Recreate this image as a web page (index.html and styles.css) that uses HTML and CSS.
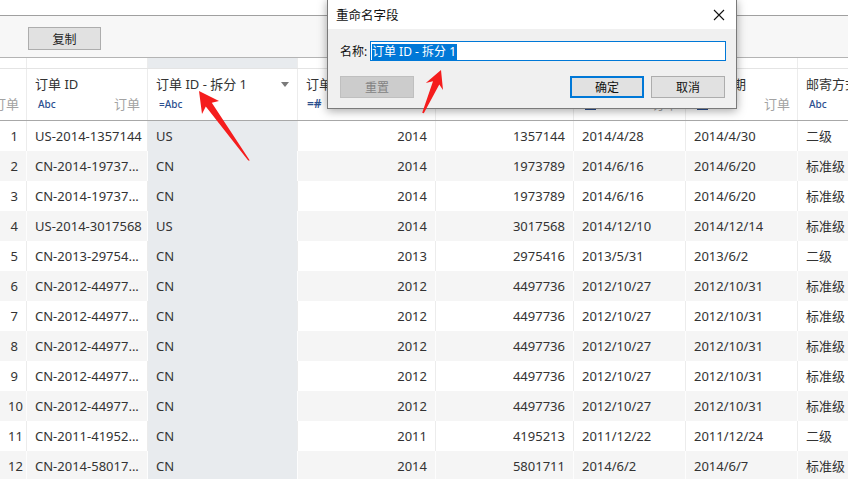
FILE: index.html
```html
<!doctype html>
<html lang="zh">
    <head>
        <meta charset="UTF-8">
        <title>重命名字段</title>
        <link rel="stylesheet" href="styles.css">
    </head>
    <body>
        <div class="app">
            <div class="topbar"></div>
            <div class="toolbar">
                <button class="btn" type="button">复制</button>
            </div>

            <div class="sheet">
                <div class="grid strip">
                    <div class="c"></div><div class="c"></div><div class="c split"></div><div class="c"></div>
                    <div class="c"></div><div class="c"></div><div class="c"></div><div class="c"></div>
                </div>
                <div class="grid head">
                    <div class="h"><div class="h-name"></div><div class="h-meta end"><span class="h-src">订单</span></div></div>
                    <div class="h"><div class="h-name">订单 ID</div><div class="h-meta"><span class="h-type">Abc</span><span class="h-src">订单</span></div></div>
                    <div class="h"><div class="h-name">订单 ID - 拆分 1<span class="caret"></span></div><div class="h-meta"><span class="h-type">=Abc</span></div></div>
                    <div class="h"><div class="h-name">订单年</div><div class="h-meta"><span class="h-type num-type">=#</span></div></div>
                    <div class="h"><div class="h-name">订单编号</div><div class="h-meta"><span class="h-type num-type">=#</span></div></div>
                    <div class="h"><div class="h-name">订单日期</div><div class="h-meta"><span class="h-type"><span class="cal"></span></span><span class="h-src">订单</span></div></div>
                    <div class="h"><div class="h-name">发货日期</div><div class="h-meta"><span class="h-type"><span class="cal"></span></span><span class="h-src">订单</span></div></div>
                    <div class="h"><div class="h-name">邮寄方式</div><div class="h-meta"><span class="h-type">Abc</span><span class="h-src">订单</span></div></div>
                </div>

                <div class="rows">
                    <div class="grid row"><div class="c r">1</div><div class="c">US-2014-1357144</div><div class="c split">US</div><div class="c r">2014</div><div class="c r">1357144</div><div class="c">2014/4/28</div><div class="c">2014/4/30</div><div class="c">二级</div></div>
                    <div class="grid row"><div class="c r">2</div><div class="c">CN-2014-19737...</div><div class="c split">CN</div><div class="c r">2014</div><div class="c r">1973789</div><div class="c">2014/6/16</div><div class="c">2014/6/20</div><div class="c">标准级</div></div>
                    <div class="grid row"><div class="c r">3</div><div class="c">CN-2014-19737...</div><div class="c split">CN</div><div class="c r">2014</div><div class="c r">1973789</div><div class="c">2014/6/16</div><div class="c">2014/6/20</div><div class="c">标准级</div></div>
                    <div class="grid row"><div class="c r">4</div><div class="c">US-2014-3017568</div><div class="c split">US</div><div class="c r">2014</div><div class="c r">3017568</div><div class="c">2014/12/10</div><div class="c">2014/12/14</div><div class="c">标准级</div></div>
                    <div class="grid row"><div class="c r">5</div><div class="c">CN-2013-29754...</div><div class="c split">CN</div><div class="c r">2013</div><div class="c r">2975416</div><div class="c">2013/5/31</div><div class="c">2013/6/2</div><div class="c">二级</div></div>
                    <div class="grid row"><div class="c r">6</div><div class="c">CN-2012-44977...</div><div class="c split">CN</div><div class="c r">2012</div><div class="c r">4497736</div><div class="c">2012/10/27</div><div class="c">2012/10/31</div><div class="c">标准级</div></div>
                    <div class="grid row"><div class="c r">7</div><div class="c">CN-2012-44977...</div><div class="c split">CN</div><div class="c r">2012</div><div class="c r">4497736</div><div class="c">2012/10/27</div><div class="c">2012/10/31</div><div class="c">标准级</div></div>
                    <div class="grid row"><div class="c r">8</div><div class="c">CN-2012-44977...</div><div class="c split">CN</div><div class="c r">2012</div><div class="c r">4497736</div><div class="c">2012/10/27</div><div class="c">2012/10/31</div><div class="c">标准级</div></div>
                    <div class="grid row"><div class="c r">9</div><div class="c">CN-2012-44977...</div><div class="c split">CN</div><div class="c r">2012</div><div class="c r">4497736</div><div class="c">2012/10/27</div><div class="c">2012/10/31</div><div class="c">标准级</div></div>
                    <div class="grid row"><div class="c r">10</div><div class="c">CN-2012-44977...</div><div class="c split">CN</div><div class="c r">2012</div><div class="c r">4497736</div><div class="c">2012/10/27</div><div class="c">2012/10/31</div><div class="c">标准级</div></div>
                    <div class="grid row"><div class="c r">11</div><div class="c">CN-2011-41952...</div><div class="c split">CN</div><div class="c r">2011</div><div class="c r">4195213</div><div class="c">2011/12/22</div><div class="c">2011/12/24</div><div class="c">二级</div></div>
                    <div class="grid row"><div class="c r">12</div><div class="c">CN-2014-58017...</div><div class="c split">CN</div><div class="c r">2014</div><div class="c r">5801711</div><div class="c">2014/6/2</div><div class="c">2014/6/7</div><div class="c">标准级</div></div>
                </div>
            </div>

            <div class="dialog">
                <div class="dlg-title">
                    <span>重命名字段</span>
                    <svg class="close" width="12" height="12" viewBox="0 0 12 12">
                        <path d="M1 1 L11 11 M11 1 L1 11" stroke="#111" stroke-width="1.1" fill="none"/>
                    </svg>
                </div>
                <div class="dlg-body">
                    <div class="field">
                        <label class="field-label">名称:</label>
                        <div class="field-input"><span class="sel">订单 ID - 拆分 1</span></div>
                    </div>
                    <div class="actions">
                        <button class="dbtn disabled" type="button">重置</button>
                        <span class="spacer"></span>
                        <button class="dbtn primary" type="button">确定</button>
                        <button class="dbtn" type="button">取消</button>
                    </div>
                </div>
            </div>

            <!-- annotation arrows -->
            <svg class="marks" width="848" height="479" viewBox="0 0 848 479">
                <polygon fill="#f51d1d" points="199,91 219,101 211.8,102.8 249.8,160.4 248.2,160.6 205.8,106.5 202,114"/>
                <polygon fill="#f51d1d" points="441,70 443,90 439.3,84.5 423.8,113.3 422.2,112.7 433,81.2 425.8,83"/>
            </svg>
        </div>
    </body>
</html>
```

FILE: styles.css
```css
body {
    margin: 0;
    font-family: "Noto Sans", "Noto Sans CJK SC", sans-serif;
    font-size: 13px;
    color: #333;
    background: #fff;
}

.app {
    position: relative;
    width: 848px;
    height: 479px;
    overflow: hidden;
}

.topbar {
    height: 15px;
    border-bottom: 1px solid #a0a0a0;
}

.toolbar {
    height: 42px;
    padding: 11px 0 0 28px;
    box-sizing: border-box;
    background: #f7f7f7;
    border-bottom: 1px solid #b4b4b4;
}

.btn {
    width: 73px;
    height: 23px;
    padding: 0;
    font-family: inherit;
    font-size: 12px;
    color: #222;
    background: #e1e1e1;
    border: 1px solid #adadad;
}

/* sheet */

.sheet {
    width: 848px;
    overflow: hidden;
}

.grid {
    display: grid;
    grid-template-columns: 27px 121px 150px 138px 138px 112px 112px 150px;
    width: 948px;
}

.strip {
    height: 11px;
    box-sizing: border-box;
    border-bottom: 1px solid #e4e4e4;
}

.c, .h {
    box-sizing: border-box;
    border-right: 1px solid #ececec;
    white-space: nowrap;
    overflow: hidden;
}

.split {
    background: #e8ebee;
}

.head {
    height: 52px;
    box-sizing: border-box;
    border-bottom: 1px solid #a8a8a8;
}

.h {
    padding: 6px 7px 0 8px;
}

.h-name {
    position: relative;
    height: 18px;
    line-height: 18px;
}

.h-meta {
    display: flex;
    justify-content: space-between;
    align-items: center;
    height: 18px;
    line-height: 18px;
    margin-top: 2px;
}

.h-meta.end {
    justify-content: flex-end;
}

.h-type {
    padding-left: 3px;
    font-size: 10px;
    font-weight: 500;
    color: #2c4f8f;
}

.num-type {
    padding-left: 1px;
    font-size: 12px;
    font-weight: 600;
}

.h-src {
    color: #a3a3a3;
}

.caret {
    position: absolute;
    right: 1px;
    top: 7px;
    border-left: 4px solid transparent;
    border-right: 4px solid transparent;
    border-top: 5px solid #7a7a7a;
}

.cal {
    display: inline-block;
    width: 11px;
    height: 10px;
    background: #2c4f8f;
    vertical-align: middle;
}

.row {
    height: 30px;
}

.row .c {
    padding: 0 8px;
    line-height: 30px;
}

.row .r {
    text-align: right;
}

.row:nth-child(even) {
    background: #f5f5f5;
}

.row:nth-child(even) .c {
    border-right-color: #fdfdfd;
}

/* dialog */

.dialog {
    position: absolute;
    left: 327px;
    top: -1px;
    width: 410px;
    box-sizing: border-box;
    border: 1px solid #7a7a7a;
    background: #f0f0f0;
    box-shadow: 0 2px 9px rgba(0, 0, 0, .35);
    font-size: 12px;
    color: #111;
}

.dlg-title {
    display: flex;
    justify-content: space-between;
    align-items: center;
    height: 29px;
    padding: 0 11px 0 8px;
    box-sizing: border-box;
    background: #fff;
    font-size: 12.5px;
}

.close {
    display: block;
}

.dlg-body {
    padding: 12px 10px 10px 12px;
}

.field {
    display: flex;
    align-items: center;
    height: 20px;
}

.field-label {
    width: 30px;
}

.field-input {
    flex: 1;
    height: 20px;
    box-sizing: border-box;
    padding: 1px 0 0 1px;
    background: #fff;
    border: 1px solid #0078d7;
}

.sel {
    display: inline-block;
    line-height: 16px;
    padding-right: 1px;
    color: #fff;
    background: #0078d7;
}

.actions {
    display: flex;
    margin-top: 15px;
    padding-right: 1px;
    gap: 7px;
}

.spacer {
    flex: 1;
}

.dbtn {
    width: 74px;
    height: 22px;
    padding: 0;
    font-family: inherit;
    font-size: 12px;
    color: #111;
    background: #e1e1e1;
    border: 1px solid #adadad;
}

.dbtn.primary {
    border: 2px solid #0078d7;
}

.dbtn.disabled {
    color: #838383;
    background: #cccccc;
    border-color: #bfbfbf;
}

.marks {
    position: absolute;
    left: 0;
    top: 0;
    pointer-events: none;
}
```
